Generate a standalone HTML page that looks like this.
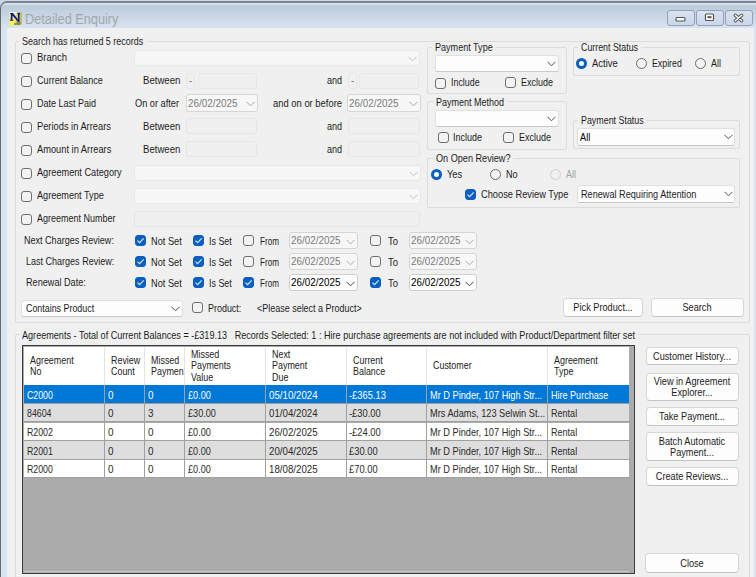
<!DOCTYPE html><html><head><meta charset="utf-8"><style>
html,body{margin:0;padding:0;}
body{width:756px;height:577px;position:relative;overflow:hidden;background:#c9d8ea;font-family:"Liberation Sans",sans-serif;}
.t{position:absolute;white-space:pre;transform-origin:0 0;}
.cb{position:absolute;width:11px;height:11px;box-sizing:border-box;border:1px solid #6f6f6f;border-radius:3px;background:#f3f3f3;}
.cb.on{background:#0a5fc0;border-color:#0a5fc0;}
.cb svg{position:absolute;left:-1px;top:-1px;}
.rb{position:absolute;width:11px;height:11px;box-sizing:border-box;border-radius:50%;border:1.3px solid #6a6a6a;background:#f4f4f4;}
.rb.on{border:3px solid #0a5fc0;background:#fff;}
.rb.dis{border-color:#cfcfcf;background:#f0f0f0;}
</style></head><body>
<div style="position:absolute;left:0px;top:1px;width:780px;height:600px;box-sizing:border-box;border-top:2px solid #7b8290;border-left:1px solid #6a6a70;border-top-left-radius:7px;background:linear-gradient(#e4e9ef 0px,#bccbdb 3px,#d8e4f1 26px,#d8e4f1 100%);"></div>
<svg style="position:absolute;left:8px;top:11px" width="15" height="14" viewBox="0 0 15 14">
<defs><linearGradient id="ig" x1="0" y1="0" x2="0" y2="1"><stop offset="0" stop-color="#f4f4dc"/><stop offset="0.55" stop-color="#e4e490"/><stop offset="1" stop-color="#f2ee50"/></linearGradient></defs>
<rect x="1" y="1" width="13" height="13" fill="url(#ig)"/>
<path d="M9 1 L14 1 L14 13 L12 14 L8 12 Z" fill="#b8b860" opacity="0.8"/>
<path d="M1 10 L6 10 L9 14 L1 14Z" fill="#f6f250"/>
<path d="M6 12 L13 11 L12 14 L6 14Z" fill="#5a5a30" opacity="0.6"/>
<path d="M1.5 2 L5 2 L10 8.5 L10 3.5 L9 2 L12.5 2 L11.5 3.5 L11.5 11 L10 11 L4.5 4.5 L4.5 8.5 L5.5 9.8 L1.5 9.8 L2.8 8.5 L2.8 3.3 Z" fill="#161680"/>
</svg>
<div class="t" style="left:25px;top:10.75px;font-size:14px;line-height:16.8px;color:#a2a6ab;transform:scaleX(0.91);">Detailed Enquiry</div>
<div style="position:absolute;left:667px;top:10px;width:28px;height:16px;box-sizing:border-box;border:1px solid #93a1b8;border-radius:3px;background:linear-gradient(#d9e3ef,#c9d7e8);"></div>
<div style="position:absolute;left:696px;top:10px;width:28px;height:16px;box-sizing:border-box;border:1px solid #93a1b8;border-radius:3px;background:linear-gradient(#d9e3ef,#c9d7e8);"></div>
<div style="position:absolute;left:725px;top:10px;width:28px;height:16px;box-sizing:border-box;border:1px solid #93a1b8;border-radius:3px;background:linear-gradient(#d9e3ef,#c9d7e8);"></div>
<svg style="position:absolute;left:667px;top:10px" width="90" height="16" viewBox="0 0 90 16"><rect x="9" y="7.5" width="9" height="3.5" rx="1" fill="#fff" stroke="#555" stroke-width="1.2"/><rect x="38.5" y="4" width="8" height="6.5" rx="1" fill="#fff" stroke="#555" stroke-width="1.2"/><rect x="40.5" y="6.2" width="4" height="2" fill="#555"/><path d="M68.3 5.3 L74.7 10.7 M74.7 5.3 L68.3 10.7" stroke="#555" stroke-width="3.4" stroke-linecap="round"/><path d="M68.3 5.3 L74.7 10.7 M74.7 5.3 L68.3 10.7" stroke="#fff" stroke-width="1.4" stroke-linecap="round"/></svg>
<div style="position:absolute;left:7px;top:28px;width:747px;height:560px;box-sizing:border-box;background:#f0f0f0;"></div>
<div style="position:absolute;left:15px;top:41px;width:735px;height:282px;box-sizing:border-box;border:1px solid #dcdcdc;border-radius:2px;"></div>
<div style="position:absolute;left:19.4px;top:38px;width:127.29999999999998px;height:6px;box-sizing:border-box;background:#f0f0f0;"></div>
<div class="t" style="left:22.4px;top:35.26px;font-size:10.5px;line-height:12.6px;color:#1c1c1c;transform:scaleX(0.8553);">Search has returned 5 records</div>
<div class="cb" style="left:21px;top:53px"></div>
<div class="t" style="left:37.0px;top:51.95px;font-size:10.2px;line-height:12.24px;color:#1c1c1c;transform:scaleX(0.9284);">Branch</div>
<div class="cb" style="left:21px;top:76px"></div>
<div class="t" style="left:37.0px;top:74.95px;font-size:10.2px;line-height:12.24px;color:#1c1c1c;transform:scaleX(0.8941);">Current Balance</div>
<div class="cb" style="left:21px;top:99px"></div>
<div class="t" style="left:37.0px;top:97.95px;font-size:10.2px;line-height:12.24px;color:#1c1c1c;transform:scaleX(0.8818);">Date Last Paid</div>
<div class="cb" style="left:21px;top:122px"></div>
<div class="t" style="left:37.0px;top:120.95px;font-size:10.2px;line-height:12.24px;color:#1c1c1c;transform:scaleX(0.9128);">Periods in Arrears</div>
<div class="cb" style="left:21px;top:145px"></div>
<div class="t" style="left:37.0px;top:143.95px;font-size:10.2px;line-height:12.24px;color:#1c1c1c;transform:scaleX(0.9114);">Amount in Arrears</div>
<div class="cb" style="left:21px;top:168px"></div>
<div class="t" style="left:37.0px;top:166.95px;font-size:10.2px;line-height:12.24px;color:#1c1c1c;transform:scaleX(0.901);">Agreement Category</div>
<div class="cb" style="left:21px;top:191px"></div>
<div class="t" style="left:37.0px;top:189.95px;font-size:10.2px;line-height:12.24px;color:#1c1c1c;transform:scaleX(0.8961);">Agreement Type</div>
<div class="cb" style="left:21px;top:214px"></div>
<div class="t" style="left:37.0px;top:212.95px;font-size:10.2px;line-height:12.24px;color:#1c1c1c;transform:scaleX(0.8842);">Agreement Number</div>
<div style="position:absolute;left:134px;top:50px;width:286px;height:16px;box-sizing:border-box;background:#f7f7f7;border:1px solid #e8e8e8;border-radius:3px;"></div>
<svg style="position:absolute;left:408px;top:55.5px" width="9" height="6" viewBox="0 0 9 6"><path d="M0.5 0.8 L4.5 4.8 L8.5 0.8" fill="none" stroke="#c0c0c0" stroke-width="1"/></svg>
<div class="t" style="left:142.6px;top:74.95px;font-size:10.2px;line-height:12.24px;color:#1c1c1c;transform:scaleX(0.9421);">Between</div>
<div style="position:absolute;left:186px;top:73px;width:9px;height:16px;box-sizing:border-box;background:#f0f0f0;border:1px solid #e6e6e6;border-radius:3px;"></div>
<div class="t" style="left:189px;top:74.06px;font-size:10.5px;line-height:12.6px;color:#707070;transform:scaleX(0.875);">-</div>
<div style="position:absolute;left:197.5px;top:73px;width:59.5px;height:16px;box-sizing:border-box;background:#f0f0f0;border:1px solid #e6e6e6;border-radius:3px;"></div>
<div class="t" style="left:326.7px;top:74.95px;font-size:10.2px;line-height:12.24px;color:#1c1c1c;transform:scaleX(0.8816);">and</div>
<div style="position:absolute;left:348px;top:73px;width:9px;height:16px;box-sizing:border-box;background:#f0f0f0;border:1px solid #e6e6e6;border-radius:3px;"></div>
<div class="t" style="left:351px;top:74.06px;font-size:10.5px;line-height:12.6px;color:#707070;transform:scaleX(0.875);">-</div>
<div style="position:absolute;left:359px;top:73px;width:60px;height:16px;box-sizing:border-box;background:#f0f0f0;border:1px solid #e6e6e6;border-radius:3px;"></div>
<div class="t" style="left:135.0px;top:97.95px;font-size:10.2px;line-height:12.24px;color:#1c1c1c;transform:scaleX(0.9025);">On or after</div>
<div style="position:absolute;left:186px;top:94px;width:72px;height:18px;box-sizing:border-box;background:#f7f7f7;border:1px solid #d6d6d6;border-radius:3px;"></div>
<div class="t" style="left:187.6px;top:96.86px;font-size:10.5px;line-height:12.6px;color:#7a7a7a;transform:scaleX(0.94);">26/02/2025</div>
<svg style="position:absolute;left:246px;top:101.0px" width="9" height="6" viewBox="0 0 9 6"><path d="M0.5 0.8 L4.5 4.8 L8.5 0.8" fill="none" stroke="#a8a8a8" stroke-width="1"/></svg>
<div class="t" style="left:272.6px;top:97.95px;font-size:10.2px;line-height:12.24px;color:#1c1c1c;transform:scaleX(0.9231);">and on or before</div>
<div style="position:absolute;left:347px;top:94px;width:74px;height:18px;box-sizing:border-box;background:#f7f7f7;border:1px solid #d6d6d6;border-radius:3px;"></div>
<div class="t" style="left:348.6px;top:96.86px;font-size:10.5px;line-height:12.6px;color:#7a7a7a;transform:scaleX(0.94);">26/02/2025</div>
<svg style="position:absolute;left:409px;top:101.0px" width="9" height="6" viewBox="0 0 9 6"><path d="M0.5 0.8 L4.5 4.8 L8.5 0.8" fill="none" stroke="#a8a8a8" stroke-width="1"/></svg>
<div class="t" style="left:142.6px;top:120.95px;font-size:10.2px;line-height:12.24px;color:#1c1c1c;transform:scaleX(0.9421);">Between</div>
<div style="position:absolute;left:186px;top:118px;width:71px;height:16px;box-sizing:border-box;background:#f0f0f0;border:1px solid #e6e6e6;border-radius:3px;"></div>
<div class="t" style="left:326.7px;top:120.95px;font-size:10.2px;line-height:12.24px;color:#1c1c1c;transform:scaleX(0.8816);">and</div>
<div style="position:absolute;left:347.5px;top:118px;width:72px;height:16px;box-sizing:border-box;background:#f0f0f0;border:1px solid #e6e6e6;border-radius:3px;"></div>
<div class="t" style="left:142.6px;top:143.95px;font-size:10.2px;line-height:12.24px;color:#1c1c1c;transform:scaleX(0.9421);">Between</div>
<div style="position:absolute;left:186px;top:141px;width:71px;height:16px;box-sizing:border-box;background:#f0f0f0;border:1px solid #e6e6e6;border-radius:3px;"></div>
<div class="t" style="left:326.7px;top:143.95px;font-size:10.2px;line-height:12.24px;color:#1c1c1c;transform:scaleX(0.8816);">and</div>
<div style="position:absolute;left:347.5px;top:141px;width:72px;height:16px;box-sizing:border-box;background:#f0f0f0;border:1px solid #e6e6e6;border-radius:3px;"></div>
<div style="position:absolute;left:134px;top:165px;width:286.5px;height:16px;box-sizing:border-box;background:#f7f7f7;border:1px solid #e8e8e8;border-radius:3px;"></div>
<svg style="position:absolute;left:408.5px;top:170.5px" width="9" height="6" viewBox="0 0 9 6"><path d="M0.5 0.8 L4.5 4.8 L8.5 0.8" fill="none" stroke="#c0c0c0" stroke-width="1"/></svg>
<div style="position:absolute;left:134px;top:188px;width:286.5px;height:16px;box-sizing:border-box;background:#f7f7f7;border:1px solid #e8e8e8;border-radius:3px;"></div>
<svg style="position:absolute;left:408.5px;top:193.5px" width="9" height="6" viewBox="0 0 9 6"><path d="M0.5 0.8 L4.5 4.8 L8.5 0.8" fill="none" stroke="#c0c0c0" stroke-width="1"/></svg>
<div style="position:absolute;left:134px;top:211px;width:285.5px;height:16px;box-sizing:border-box;background:#f0f0f0;border:1px solid #e6e6e6;border-radius:3px;"></div>
<div class="t" style="left:24.0px;top:233.86px;font-size:10.5px;line-height:12.6px;color:#1c1c1c;transform:scaleX(0.8607);">Next Charges Review:</div>
<div class="cb on" style="left:134.5px;top:235px"><svg width="11" height="11" viewBox="0 0 11 11"><path d="M2.5 5.6 L4.6 7.7 L8.7 3.4" fill="none" stroke="#d6e4f5" stroke-width="1.2"/></svg></div>
<div class="t" style="left:151.0px;top:234.66px;font-size:10.5px;line-height:12.6px;color:#1c1c1c;transform:scaleX(0.8767);">Not Set</div>
<div class="cb on" style="left:192.5px;top:235px"><svg width="11" height="11" viewBox="0 0 11 11"><path d="M2.5 5.6 L4.6 7.7 L8.7 3.4" fill="none" stroke="#d6e4f5" stroke-width="1.2"/></svg></div>
<div class="t" style="left:208.8px;top:234.66px;font-size:10.5px;line-height:12.6px;color:#1c1c1c;transform:scaleX(0.8492);">Is Set</div>
<div class="cb" style="left:242.5px;top:235px"></div>
<div class="t" style="left:259.6px;top:234.66px;font-size:10.5px;line-height:12.6px;color:#1c1c1c;transform:scaleX(0.7756);">From</div>
<div style="position:absolute;left:289px;top:232px;width:69px;height:17px;box-sizing:border-box;background:#f7f7f7;border:1px solid #d6d6d6;border-radius:3px;"></div>
<div class="t" style="left:290.6px;top:234.36px;font-size:10.5px;line-height:12.6px;color:#7a7a7a;transform:scaleX(0.94);">26/02/2025</div>
<svg style="position:absolute;left:346px;top:238.5px" width="9" height="6" viewBox="0 0 9 6"><path d="M0.5 0.8 L4.5 4.8 L8.5 0.8" fill="none" stroke="#a8a8a8" stroke-width="1"/></svg>
<div class="cb" style="left:370px;top:235px"></div>
<div class="t" style="left:387.8px;top:234.66px;font-size:10.5px;line-height:12.6px;color:#1c1c1c;transform:scaleX(0.9019);">To</div>
<div style="position:absolute;left:409px;top:232px;width:68px;height:17px;box-sizing:border-box;background:#f7f7f7;border:1px solid #d6d6d6;border-radius:3px;"></div>
<div class="t" style="left:410.6px;top:234.36px;font-size:10.5px;line-height:12.6px;color:#7a7a7a;transform:scaleX(0.94);">26/02/2025</div>
<svg style="position:absolute;left:465px;top:238.5px" width="9" height="6" viewBox="0 0 9 6"><path d="M0.5 0.8 L4.5 4.8 L8.5 0.8" fill="none" stroke="#a8a8a8" stroke-width="1"/></svg>
<div class="t" style="left:25.7px;top:254.86px;font-size:10.5px;line-height:12.6px;color:#1c1c1c;transform:scaleX(0.8587);">Last Charges Review:</div>
<div class="cb on" style="left:134.5px;top:256px"><svg width="11" height="11" viewBox="0 0 11 11"><path d="M2.5 5.6 L4.6 7.7 L8.7 3.4" fill="none" stroke="#d6e4f5" stroke-width="1.2"/></svg></div>
<div class="t" style="left:151.0px;top:255.66px;font-size:10.5px;line-height:12.6px;color:#1c1c1c;transform:scaleX(0.8767);">Not Set</div>
<div class="cb on" style="left:192.5px;top:256px"><svg width="11" height="11" viewBox="0 0 11 11"><path d="M2.5 5.6 L4.6 7.7 L8.7 3.4" fill="none" stroke="#d6e4f5" stroke-width="1.2"/></svg></div>
<div class="t" style="left:208.8px;top:255.66px;font-size:10.5px;line-height:12.6px;color:#1c1c1c;transform:scaleX(0.8492);">Is Set</div>
<div class="cb" style="left:242.5px;top:256px"></div>
<div class="t" style="left:259.6px;top:255.66px;font-size:10.5px;line-height:12.6px;color:#1c1c1c;transform:scaleX(0.7756);">From</div>
<div style="position:absolute;left:289px;top:253px;width:69px;height:17px;box-sizing:border-box;background:#f7f7f7;border:1px solid #d6d6d6;border-radius:3px;"></div>
<div class="t" style="left:290.6px;top:255.36px;font-size:10.5px;line-height:12.6px;color:#7a7a7a;transform:scaleX(0.94);">26/02/2025</div>
<svg style="position:absolute;left:346px;top:259.5px" width="9" height="6" viewBox="0 0 9 6"><path d="M0.5 0.8 L4.5 4.8 L8.5 0.8" fill="none" stroke="#a8a8a8" stroke-width="1"/></svg>
<div class="cb" style="left:370px;top:256px"></div>
<div class="t" style="left:387.8px;top:255.66px;font-size:10.5px;line-height:12.6px;color:#1c1c1c;transform:scaleX(0.9019);">To</div>
<div style="position:absolute;left:409px;top:253px;width:68px;height:17px;box-sizing:border-box;background:#f7f7f7;border:1px solid #d6d6d6;border-radius:3px;"></div>
<div class="t" style="left:410.6px;top:255.36px;font-size:10.5px;line-height:12.6px;color:#7a7a7a;transform:scaleX(0.94);">26/02/2025</div>
<svg style="position:absolute;left:465px;top:259.5px" width="9" height="6" viewBox="0 0 9 6"><path d="M0.5 0.8 L4.5 4.8 L8.5 0.8" fill="none" stroke="#a8a8a8" stroke-width="1"/></svg>
<div class="t" style="left:25.7px;top:275.86px;font-size:10.5px;line-height:12.6px;color:#1c1c1c;transform:scaleX(0.8683);">Renewal Date:</div>
<div class="cb on" style="left:134.5px;top:277px"><svg width="11" height="11" viewBox="0 0 11 11"><path d="M2.5 5.6 L4.6 7.7 L8.7 3.4" fill="none" stroke="#d6e4f5" stroke-width="1.2"/></svg></div>
<div class="t" style="left:151.0px;top:276.66px;font-size:10.5px;line-height:12.6px;color:#1c1c1c;transform:scaleX(0.8767);">Not Set</div>
<div class="cb on" style="left:192.5px;top:277px"><svg width="11" height="11" viewBox="0 0 11 11"><path d="M2.5 5.6 L4.6 7.7 L8.7 3.4" fill="none" stroke="#d6e4f5" stroke-width="1.2"/></svg></div>
<div class="t" style="left:208.8px;top:276.66px;font-size:10.5px;line-height:12.6px;color:#1c1c1c;transform:scaleX(0.8492);">Is Set</div>
<div class="cb on" style="left:242.5px;top:277px"><svg width="11" height="11" viewBox="0 0 11 11"><path d="M2.5 5.6 L4.6 7.7 L8.7 3.4" fill="none" stroke="#d6e4f5" stroke-width="1.2"/></svg></div>
<div class="t" style="left:259.6px;top:276.66px;font-size:10.5px;line-height:12.6px;color:#1c1c1c;transform:scaleX(0.7756);">From</div>
<div style="position:absolute;left:289px;top:274px;width:69px;height:17px;box-sizing:border-box;background:#fdfdfd;border:1px solid #cfcfcf;border-radius:3px;"></div>
<div class="t" style="left:290.6px;top:276.36px;font-size:10.5px;line-height:12.6px;color:#000;transform:scaleX(0.94);">26/02/2025</div>
<svg style="position:absolute;left:346px;top:280.5px" width="9" height="6" viewBox="0 0 9 6"><path d="M0.5 0.8 L4.5 4.8 L8.5 0.8" fill="none" stroke="#404040" stroke-width="1"/></svg>
<div class="cb on" style="left:370px;top:277px"><svg width="11" height="11" viewBox="0 0 11 11"><path d="M2.5 5.6 L4.6 7.7 L8.7 3.4" fill="none" stroke="#d6e4f5" stroke-width="1.2"/></svg></div>
<div class="t" style="left:387.8px;top:276.66px;font-size:10.5px;line-height:12.6px;color:#1c1c1c;transform:scaleX(0.9019);">To</div>
<div style="position:absolute;left:409px;top:274px;width:68px;height:17px;box-sizing:border-box;background:#fdfdfd;border:1px solid #cfcfcf;border-radius:3px;"></div>
<div class="t" style="left:410.6px;top:276.36px;font-size:10.5px;line-height:12.6px;color:#000;transform:scaleX(0.94);">26/02/2025</div>
<svg style="position:absolute;left:465px;top:280.5px" width="9" height="6" viewBox="0 0 9 6"><path d="M0.5 0.8 L4.5 4.8 L8.5 0.8" fill="none" stroke="#404040" stroke-width="1"/></svg>
<div style="position:absolute;left:21.3px;top:299.5px;width:162px;height:17px;box-sizing:border-box;background:#fdfdfd;border:1px solid #e0e0e0;border-bottom-color:#c8c8c8;border-radius:3px;"></div>
<svg style="position:absolute;left:171.3px;top:305.5px" width="9" height="6" viewBox="0 0 9 6"><path d="M0.5 0.8 L4.5 4.8 L8.5 0.8" fill="none" stroke="#505050" stroke-width="1"/></svg>
<div class="t" style="left:25.5px;top:302.06px;font-size:10.5px;line-height:12.6px;color:#1c1c1c;transform:scaleX(0.8455);">Contains Product</div>
<div class="cb" style="left:192.2px;top:302px"></div>
<div class="t" style="left:207.9px;top:301.56px;font-size:10.5px;line-height:12.6px;color:#1c1c1c;transform:scaleX(0.8516);">Product:</div>
<div class="t" style="left:257.0px;top:301.56px;font-size:10.5px;line-height:12.6px;color:#1c1c1c;transform:scaleX(0.8542);">&lt;Please select a Product&gt;</div>
<div style="position:absolute;left:563px;top:298px;width:80px;height:19px;box-sizing:border-box;background:#fdfdfd;border:1px solid #d6d6d6;border-bottom-color:#c4c4c4;border-radius:4px;"></div>
<div class="t" style="left:403.0px;width:400px;text-align:center;top:301.16px;font-size:10.5px;line-height:12.6px;color:#1c1c1c;transform:scaleX(0.875);transform-origin:50% 0">Pick Product...</div>
<div style="position:absolute;left:651px;top:298px;width:92.5px;height:19px;box-sizing:border-box;background:#fdfdfd;border:1px solid #d6d6d6;border-bottom-color:#c4c4c4;border-radius:4px;"></div>
<div class="t" style="left:497.25px;width:400px;text-align:center;top:301.16px;font-size:10.5px;line-height:12.6px;color:#1c1c1c;transform:scaleX(0.875);transform-origin:50% 0">Search</div>
<div style="position:absolute;left:427.4px;top:47px;width:139.2px;height:46.5px;box-sizing:border-box;border:1px solid #dcdcdc;border-radius:2px;"></div>
<div style="position:absolute;left:432.3px;top:44px;width:63.69999999999999px;height:6px;box-sizing:border-box;background:#f0f0f0;"></div>
<div class="t" style="left:435.3px;top:41.46px;font-size:10.5px;line-height:12.6px;color:#1c1c1c;transform:scaleX(0.8621);">Payment Type</div>
<div style="position:absolute;left:435.3px;top:55px;width:124px;height:17px;box-sizing:border-box;background:#fdfdfd;border:1px solid #e0e0e0;border-bottom-color:#c8c8c8;border-radius:3px;"></div>
<svg style="position:absolute;left:547.3px;top:61.0px" width="9" height="6" viewBox="0 0 9 6"><path d="M0.5 0.8 L4.5 4.8 L8.5 0.8" fill="none" stroke="#505050" stroke-width="1"/></svg>
<div class="cb" style="left:435px;top:77.6px"></div>
<div class="t" style="left:450.8px;top:75.66px;font-size:10.5px;line-height:12.6px;color:#1c1c1c;transform:scaleX(0.8446);">Include</div>
<div class="cb" style="left:505px;top:77px"></div>
<div class="t" style="left:521.0px;top:75.66px;font-size:10.5px;line-height:12.6px;color:#1c1c1c;transform:scaleX(0.8566);">Exclude</div>
<div style="position:absolute;left:427.4px;top:101px;width:139.2px;height:49px;box-sizing:border-box;border:1px solid #dcdcdc;border-radius:2px;"></div>
<div style="position:absolute;left:432.5px;top:98px;width:74.0px;height:6px;box-sizing:border-box;background:#f0f0f0;"></div>
<div class="t" style="left:435.5px;top:95.76px;font-size:10.5px;line-height:12.6px;color:#1c1c1c;transform:scaleX(0.8566);">Payment Method</div>
<div style="position:absolute;left:435.3px;top:110px;width:124px;height:16.5px;box-sizing:border-box;background:#fdfdfd;border:1px solid #e0e0e0;border-bottom-color:#c8c8c8;border-radius:3px;"></div>
<svg style="position:absolute;left:547.3px;top:115.75px" width="9" height="6" viewBox="0 0 9 6"><path d="M0.5 0.8 L4.5 4.8 L8.5 0.8" fill="none" stroke="#505050" stroke-width="1"/></svg>
<div class="cb" style="left:437.5px;top:132px"></div>
<div class="t" style="left:453.1px;top:131.26px;font-size:10.5px;line-height:12.6px;color:#1c1c1c;transform:scaleX(0.8535);">Include</div>
<div class="cb" style="left:503px;top:132px"></div>
<div class="t" style="left:519.0px;top:131.26px;font-size:10.5px;line-height:12.6px;color:#1c1c1c;transform:scaleX(0.8566);">Exclude</div>
<div style="position:absolute;left:573.4px;top:47px;width:167px;height:29px;box-sizing:border-box;border:1px solid #dcdcdc;border-radius:2px;"></div>
<div style="position:absolute;left:577.7px;top:44px;width:63.0px;height:6px;box-sizing:border-box;background:#f0f0f0;"></div>
<div class="t" style="left:580.7px;top:41.46px;font-size:10.5px;line-height:12.6px;color:#1c1c1c;transform:scaleX(0.842);">Current Status</div>
<div class="rb on" style="left:576px;top:58px"></div>
<div class="t" style="left:592.3px;top:57.06px;font-size:10.5px;line-height:12.6px;color:#1c1c1c;transform:scaleX(0.9024);">Active</div>
<div class="rb off" style="left:635.7px;top:58px"></div>
<div class="t" style="left:652.4px;top:57.06px;font-size:10.5px;line-height:12.6px;color:#1c1c1c;transform:scaleX(0.8369);">Expired</div>
<div class="rb off" style="left:694.8px;top:58px"></div>
<div class="t" style="left:711.3px;top:57.06px;font-size:10.5px;line-height:12.6px;color:#1c1c1c;transform:scaleX(0.8572);">All</div>
<div style="position:absolute;left:573.4px;top:120px;width:167px;height:29px;box-sizing:border-box;border:1px solid #dcdcdc;border-radius:2px;"></div>
<div style="position:absolute;left:577.7px;top:117px;width:68.69999999999993px;height:6px;box-sizing:border-box;background:#f0f0f0;"></div>
<div class="t" style="left:580.7px;top:114.26px;font-size:10.5px;line-height:12.6px;color:#1c1c1c;transform:scaleX(0.8459);">Payment Status</div>
<div style="position:absolute;left:577.3px;top:128px;width:158.2px;height:17.5px;box-sizing:border-box;background:#fdfdfd;border:1px solid #e0e0e0;border-bottom-color:#c8c8c8;border-radius:3px;"></div>
<svg style="position:absolute;left:723.5px;top:134.25px" width="9" height="6" viewBox="0 0 9 6"><path d="M0.5 0.8 L4.5 4.8 L8.5 0.8" fill="none" stroke="#505050" stroke-width="1"/></svg>
<div class="t" style="left:580.3px;top:131.21px;font-size:10.5px;line-height:12.6px;color:#000;transform:scaleX(0.875);">All</div>
<div style="position:absolute;left:427.4px;top:157.5px;width:313px;height:50px;box-sizing:border-box;border:1px solid #dcdcdc;border-radius:2px;"></div>
<div style="position:absolute;left:432.5px;top:154.5px;width:80.5px;height:6px;box-sizing:border-box;background:#f0f0f0;"></div>
<div class="t" style="left:435.5px;top:152.06px;font-size:10.5px;line-height:12.6px;color:#1c1c1c;transform:scaleX(0.8683);">On Open Review?</div>
<div class="rb on" style="left:430.8px;top:169px"></div>
<div class="t" style="left:447.0px;top:167.66px;font-size:10.5px;line-height:12.6px;color:#1c1c1c;transform:scaleX(0.8876);">Yes</div>
<div class="rb off" style="left:490px;top:169px"></div>
<div class="t" style="left:505.6px;top:167.66px;font-size:10.5px;line-height:12.6px;color:#1c1c1c;transform:scaleX(0.8644);">No</div>
<div class="rb dis" style="left:550px;top:169px"></div>
<div class="t" style="left:565.9px;top:167.66px;font-size:10.5px;line-height:12.6px;color:#a0a0a0;transform:scaleX(0.8572);">All</div>
<div class="cb on" style="left:465px;top:189px"><svg width="11" height="11" viewBox="0 0 11 11"><path d="M2.5 5.6 L4.6 7.7 L8.7 3.4" fill="none" stroke="#d6e4f5" stroke-width="1.2"/></svg></div>
<div class="t" style="left:480.6px;top:188.06px;font-size:10.5px;line-height:12.6px;color:#1c1c1c;transform:scaleX(0.8826);">Choose Review Type</div>
<div style="position:absolute;left:577.3px;top:185px;width:158.2px;height:17.5px;box-sizing:border-box;background:#fdfdfd;border:1px solid #e0e0e0;border-bottom-color:#c8c8c8;border-radius:3px;"></div>
<svg style="position:absolute;left:723.5px;top:191.25px" width="9" height="6" viewBox="0 0 9 6"><path d="M0.5 0.8 L4.5 4.8 L8.5 0.8" fill="none" stroke="#505050" stroke-width="1"/></svg>
<div class="t" style="left:580.7px;top:188.46px;font-size:10.5px;line-height:12.6px;color:#1c1c1c;transform:scaleX(0.8702);">Renewal Requiring Attention</div>
<div style="position:absolute;left:15px;top:334.4px;width:735px;height:260px;box-sizing:border-box;border:1px solid #dcdcdc;border-radius:2px;"></div>
<div style="position:absolute;left:20px;top:331.4px;width:618px;height:6px;box-sizing:border-box;background:#f0f0f0;"></div>
<div class="t" style="left:22px;top:329.06px;font-size:10.5px;line-height:12.6px;color:#1c1c1c;transform:scaleX(0.865);">Agreements - Total of Current Balances = -£319.13   Records Selected: 1 : Hire purchase agreements are not included with Product/Department filter set</div>
<div style="position:absolute;left:22px;top:345px;width:613px;height:229px;box-sizing:border-box;background:#ababab;border:1.5px solid #3c3c3c;border-bottom-width:1.5px;"></div>
<div style="position:absolute;left:23.5px;top:571px;width:610px;height:1px;background:#c8c8c8"></div>
<div style="position:absolute;left:23.5px;top:346.5px;width:605.5px;height:39px;box-sizing:border-box;background:#fff;border-bottom:1px solid #a0a0a0;"></div>
<div style="position:absolute;left:629px;top:346.5px;width:4.5px;height:226px;box-sizing:border-box;background:#ababab;"></div>
<div style="position:absolute;left:104px;top:346.5px;width:1px;height:38.5px;box-sizing:border-box;background:#e4e4e4;"></div>
<div style="position:absolute;left:144.3px;top:346.5px;width:1px;height:38.5px;box-sizing:border-box;background:#e4e4e4;"></div>
<div style="position:absolute;left:184.2px;top:346.5px;width:1px;height:38.5px;box-sizing:border-box;background:#e4e4e4;"></div>
<div style="position:absolute;left:265.2px;top:346.5px;width:1px;height:38.5px;box-sizing:border-box;background:#e4e4e4;"></div>
<div style="position:absolute;left:346.2px;top:346.5px;width:1px;height:38.5px;box-sizing:border-box;background:#e4e4e4;"></div>
<div style="position:absolute;left:426.3px;top:346.5px;width:1px;height:38.5px;box-sizing:border-box;background:#e4e4e4;"></div>
<div style="position:absolute;left:547.3px;top:346.5px;width:1px;height:38.5px;box-sizing:border-box;background:#e4e4e4;"></div>
<div class="t" style="left:30.0px;top:353.71px;font-size:10.5px;line-height:12.6px;color:#222;transform:scaleX(0.85);">Agreement</div>
<div class="t" style="left:30.0px;top:365.01px;font-size:10.5px;line-height:12.6px;color:#222;transform:scaleX(0.85);">No</div>
<div class="t" style="left:110.5px;top:353.71px;font-size:10.5px;line-height:12.6px;color:#222;transform:scaleX(0.85);">Review</div>
<div class="t" style="left:110.5px;top:365.01px;font-size:10.5px;line-height:12.6px;color:#222;transform:scaleX(0.85);">Count</div>
<div class="t" style="left:150.8px;top:353.71px;font-size:10.5px;line-height:12.6px;color:#222;transform:scaleX(0.85);">Missed</div>
<div class="t" style="left:150.8px;top:365.01px;font-size:10.5px;line-height:12.6px;color:#222;transform:scaleX(0.85);">Paymen</div>
<div class="t" style="left:190.7px;top:348.06px;font-size:10.5px;line-height:12.6px;color:#222;transform:scaleX(0.85);">Missed</div>
<div class="t" style="left:190.7px;top:359.36px;font-size:10.5px;line-height:12.6px;color:#222;transform:scaleX(0.85);">Payments</div>
<div class="t" style="left:190.7px;top:370.66px;font-size:10.5px;line-height:12.6px;color:#222;transform:scaleX(0.85);">Value</div>
<div class="t" style="left:271.7px;top:348.06px;font-size:10.5px;line-height:12.6px;color:#222;transform:scaleX(0.85);">Next</div>
<div class="t" style="left:271.7px;top:359.36px;font-size:10.5px;line-height:12.6px;color:#222;transform:scaleX(0.85);">Payment</div>
<div class="t" style="left:271.7px;top:370.66px;font-size:10.5px;line-height:12.6px;color:#222;transform:scaleX(0.85);">Due</div>
<div class="t" style="left:352.7px;top:353.71px;font-size:10.5px;line-height:12.6px;color:#222;transform:scaleX(0.85);">Current</div>
<div class="t" style="left:352.7px;top:365.01px;font-size:10.5px;line-height:12.6px;color:#222;transform:scaleX(0.85);">Balance</div>
<div class="t" style="left:432.8px;top:359.36px;font-size:10.5px;line-height:12.6px;color:#222;transform:scaleX(0.85);">Customer</div>
<div class="t" style="left:553.8px;top:353.71px;font-size:10.5px;line-height:12.6px;color:#222;transform:scaleX(0.85);">Agreement</div>
<div class="t" style="left:553.8px;top:365.01px;font-size:10.5px;line-height:12.6px;color:#222;transform:scaleX(0.85);">Type</div>
<div style="position:absolute;left:23.5px;top:385.2px;width:605.5px;height:18.65px;box-sizing:border-box;background:#0078d7;border-bottom:1px solid #a0a0a0;"></div>
<div style="position:absolute;left:104px;top:385.2px;width:1px;height:18.65px;box-sizing:border-box;background:#a0a0a0;"></div>
<div style="position:absolute;left:144.3px;top:385.2px;width:1px;height:18.65px;box-sizing:border-box;background:#a0a0a0;"></div>
<div style="position:absolute;left:184.2px;top:385.2px;width:1px;height:18.65px;box-sizing:border-box;background:#a0a0a0;"></div>
<div style="position:absolute;left:265.2px;top:385.2px;width:1px;height:18.65px;box-sizing:border-box;background:#a0a0a0;"></div>
<div style="position:absolute;left:346.2px;top:385.2px;width:1px;height:18.65px;box-sizing:border-box;background:#a0a0a0;"></div>
<div style="position:absolute;left:426.3px;top:385.2px;width:1px;height:18.65px;box-sizing:border-box;background:#a0a0a0;"></div>
<div style="position:absolute;left:547.3px;top:385.2px;width:1px;height:18.65px;box-sizing:border-box;background:#a0a0a0;"></div>
<div class="t" style="left:26.9px;top:388.69px;font-size:11px;line-height:13.2px;color:#fff;transform:scaleX(0.799);">C2000</div>
<div class="t" style="left:107.6px;top:388.69px;font-size:11px;line-height:13.2px;color:#fff;transform:scaleX(0.8993);">0</div>
<div class="t" style="left:147.9px;top:388.69px;font-size:11px;line-height:13.2px;color:#fff;transform:scaleX(0.8993);">0</div>
<div class="t" style="left:187.9px;top:388.69px;font-size:11px;line-height:13.2px;color:#fff;transform:scaleX(0.8284);">£0.00</div>
<div class="t" style="left:269.0px;top:388.69px;font-size:11px;line-height:13.2px;color:#fff;transform:scaleX(0.8828);">05/10/2024</div>
<div class="t" style="left:348.7px;top:388.69px;font-size:11px;line-height:13.2px;color:#fff;transform:scaleX(0.8497);">-£365.13</div>
<div class="t" style="left:430.3px;top:388.69px;font-size:11px;line-height:13.2px;color:#fff;transform:scaleX(0.8372);">Mr D Pinder, 107 High Str...</div>
<div class="t" style="left:551.0px;top:388.69px;font-size:11px;line-height:13.2px;color:#fff;transform:scaleX(0.8221);">Hire Purchase</div>
<div style="position:absolute;left:23.5px;top:403.84999999999997px;width:605.5px;height:18.65px;box-sizing:border-box;background:#dedede;border-bottom:1px solid #a0a0a0;"></div>
<div style="position:absolute;left:104px;top:403.84999999999997px;width:1px;height:18.65px;box-sizing:border-box;background:#a0a0a0;"></div>
<div style="position:absolute;left:144.3px;top:403.84999999999997px;width:1px;height:18.65px;box-sizing:border-box;background:#a0a0a0;"></div>
<div style="position:absolute;left:184.2px;top:403.84999999999997px;width:1px;height:18.65px;box-sizing:border-box;background:#a0a0a0;"></div>
<div style="position:absolute;left:265.2px;top:403.84999999999997px;width:1px;height:18.65px;box-sizing:border-box;background:#a0a0a0;"></div>
<div style="position:absolute;left:346.2px;top:403.84999999999997px;width:1px;height:18.65px;box-sizing:border-box;background:#a0a0a0;"></div>
<div style="position:absolute;left:426.3px;top:403.84999999999997px;width:1px;height:18.65px;box-sizing:border-box;background:#a0a0a0;"></div>
<div style="position:absolute;left:547.3px;top:403.84999999999997px;width:1px;height:18.65px;box-sizing:border-box;background:#a0a0a0;"></div>
<div class="t" style="left:26.9px;top:407.34px;font-size:11px;line-height:13.2px;color:#2a2a2a;transform:scaleX(0.799);">84604</div>
<div class="t" style="left:107.6px;top:407.34px;font-size:11px;line-height:13.2px;color:#2a2a2a;transform:scaleX(0.8993);">0</div>
<div class="t" style="left:147.9px;top:407.34px;font-size:11px;line-height:13.2px;color:#2a2a2a;transform:scaleX(0.8993);">3</div>
<div class="t" style="left:187.9px;top:407.34px;font-size:11px;line-height:13.2px;color:#2a2a2a;transform:scaleX(0.8284);">£30.00</div>
<div class="t" style="left:269.0px;top:407.34px;font-size:11px;line-height:13.2px;color:#2a2a2a;transform:scaleX(0.8828);">01/04/2024</div>
<div class="t" style="left:348.7px;top:407.34px;font-size:11px;line-height:13.2px;color:#2a2a2a;transform:scaleX(0.8497);">-£30.00</div>
<div class="t" style="left:430.3px;top:407.34px;font-size:11px;line-height:13.2px;color:#2a2a2a;transform:scaleX(0.8372);">Mrs Adams, 123 Selwin St...</div>
<div class="t" style="left:551.0px;top:407.34px;font-size:11px;line-height:13.2px;color:#2a2a2a;transform:scaleX(0.8221);">Rental</div>
<div style="position:absolute;left:23.5px;top:422.5px;width:605.5px;height:18.65px;box-sizing:border-box;background:#fff;border-bottom:1px solid #a0a0a0;"></div>
<div style="position:absolute;left:104px;top:422.5px;width:1px;height:18.65px;box-sizing:border-box;background:#a0a0a0;"></div>
<div style="position:absolute;left:144.3px;top:422.5px;width:1px;height:18.65px;box-sizing:border-box;background:#a0a0a0;"></div>
<div style="position:absolute;left:184.2px;top:422.5px;width:1px;height:18.65px;box-sizing:border-box;background:#a0a0a0;"></div>
<div style="position:absolute;left:265.2px;top:422.5px;width:1px;height:18.65px;box-sizing:border-box;background:#a0a0a0;"></div>
<div style="position:absolute;left:346.2px;top:422.5px;width:1px;height:18.65px;box-sizing:border-box;background:#a0a0a0;"></div>
<div style="position:absolute;left:426.3px;top:422.5px;width:1px;height:18.65px;box-sizing:border-box;background:#a0a0a0;"></div>
<div style="position:absolute;left:547.3px;top:422.5px;width:1px;height:18.65px;box-sizing:border-box;background:#a0a0a0;"></div>
<div class="t" style="left:26.9px;top:425.99px;font-size:11px;line-height:13.2px;color:#2a2a2a;transform:scaleX(0.799);">R2002</div>
<div class="t" style="left:107.6px;top:425.99px;font-size:11px;line-height:13.2px;color:#2a2a2a;transform:scaleX(0.8993);">0</div>
<div class="t" style="left:147.9px;top:425.99px;font-size:11px;line-height:13.2px;color:#2a2a2a;transform:scaleX(0.8993);">0</div>
<div class="t" style="left:187.9px;top:425.99px;font-size:11px;line-height:13.2px;color:#2a2a2a;transform:scaleX(0.8284);">£0.00</div>
<div class="t" style="left:269.0px;top:425.99px;font-size:11px;line-height:13.2px;color:#2a2a2a;transform:scaleX(0.8828);">26/02/2025</div>
<div class="t" style="left:348.7px;top:425.99px;font-size:11px;line-height:13.2px;color:#2a2a2a;transform:scaleX(0.8497);">-£24.00</div>
<div class="t" style="left:430.3px;top:425.99px;font-size:11px;line-height:13.2px;color:#2a2a2a;transform:scaleX(0.8372);">Mr D Pinder, 107 High Str...</div>
<div class="t" style="left:551.0px;top:425.99px;font-size:11px;line-height:13.2px;color:#2a2a2a;transform:scaleX(0.8221);">Rental</div>
<div style="position:absolute;left:23.5px;top:441.15px;width:605.5px;height:18.65px;box-sizing:border-box;background:#dedede;border-bottom:1px solid #a0a0a0;"></div>
<div style="position:absolute;left:104px;top:441.15px;width:1px;height:18.65px;box-sizing:border-box;background:#a0a0a0;"></div>
<div style="position:absolute;left:144.3px;top:441.15px;width:1px;height:18.65px;box-sizing:border-box;background:#a0a0a0;"></div>
<div style="position:absolute;left:184.2px;top:441.15px;width:1px;height:18.65px;box-sizing:border-box;background:#a0a0a0;"></div>
<div style="position:absolute;left:265.2px;top:441.15px;width:1px;height:18.65px;box-sizing:border-box;background:#a0a0a0;"></div>
<div style="position:absolute;left:346.2px;top:441.15px;width:1px;height:18.65px;box-sizing:border-box;background:#a0a0a0;"></div>
<div style="position:absolute;left:426.3px;top:441.15px;width:1px;height:18.65px;box-sizing:border-box;background:#a0a0a0;"></div>
<div style="position:absolute;left:547.3px;top:441.15px;width:1px;height:18.65px;box-sizing:border-box;background:#a0a0a0;"></div>
<div class="t" style="left:26.9px;top:444.64px;font-size:11px;line-height:13.2px;color:#2a2a2a;transform:scaleX(0.799);">R2001</div>
<div class="t" style="left:107.6px;top:444.64px;font-size:11px;line-height:13.2px;color:#2a2a2a;transform:scaleX(0.8993);">0</div>
<div class="t" style="left:147.9px;top:444.64px;font-size:11px;line-height:13.2px;color:#2a2a2a;transform:scaleX(0.8993);">0</div>
<div class="t" style="left:187.9px;top:444.64px;font-size:11px;line-height:13.2px;color:#2a2a2a;transform:scaleX(0.8284);">£0.00</div>
<div class="t" style="left:269.0px;top:444.64px;font-size:11px;line-height:13.2px;color:#2a2a2a;transform:scaleX(0.8828);">20/04/2025</div>
<div class="t" style="left:348.7px;top:444.64px;font-size:11px;line-height:13.2px;color:#2a2a2a;transform:scaleX(0.8497);">£30.00</div>
<div class="t" style="left:430.3px;top:444.64px;font-size:11px;line-height:13.2px;color:#2a2a2a;transform:scaleX(0.8372);">Mr D Pinder, 107 High Str...</div>
<div class="t" style="left:551.0px;top:444.64px;font-size:11px;line-height:13.2px;color:#2a2a2a;transform:scaleX(0.8221);">Rental</div>
<div style="position:absolute;left:23.5px;top:459.79999999999995px;width:605.5px;height:18.65px;box-sizing:border-box;background:#fff;border-bottom:1px solid #a0a0a0;"></div>
<div style="position:absolute;left:104px;top:459.79999999999995px;width:1px;height:18.65px;box-sizing:border-box;background:#a0a0a0;"></div>
<div style="position:absolute;left:144.3px;top:459.79999999999995px;width:1px;height:18.65px;box-sizing:border-box;background:#a0a0a0;"></div>
<div style="position:absolute;left:184.2px;top:459.79999999999995px;width:1px;height:18.65px;box-sizing:border-box;background:#a0a0a0;"></div>
<div style="position:absolute;left:265.2px;top:459.79999999999995px;width:1px;height:18.65px;box-sizing:border-box;background:#a0a0a0;"></div>
<div style="position:absolute;left:346.2px;top:459.79999999999995px;width:1px;height:18.65px;box-sizing:border-box;background:#a0a0a0;"></div>
<div style="position:absolute;left:426.3px;top:459.79999999999995px;width:1px;height:18.65px;box-sizing:border-box;background:#a0a0a0;"></div>
<div style="position:absolute;left:547.3px;top:459.79999999999995px;width:1px;height:18.65px;box-sizing:border-box;background:#a0a0a0;"></div>
<div class="t" style="left:26.9px;top:463.29px;font-size:11px;line-height:13.2px;color:#2a2a2a;transform:scaleX(0.799);">R2000</div>
<div class="t" style="left:107.6px;top:463.29px;font-size:11px;line-height:13.2px;color:#2a2a2a;transform:scaleX(0.8993);">0</div>
<div class="t" style="left:147.9px;top:463.29px;font-size:11px;line-height:13.2px;color:#2a2a2a;transform:scaleX(0.8993);">0</div>
<div class="t" style="left:187.9px;top:463.29px;font-size:11px;line-height:13.2px;color:#2a2a2a;transform:scaleX(0.8284);">£0.00</div>
<div class="t" style="left:269.0px;top:463.29px;font-size:11px;line-height:13.2px;color:#2a2a2a;transform:scaleX(0.8828);">18/08/2025</div>
<div class="t" style="left:348.7px;top:463.29px;font-size:11px;line-height:13.2px;color:#2a2a2a;transform:scaleX(0.8497);">£70.00</div>
<div class="t" style="left:430.3px;top:463.29px;font-size:11px;line-height:13.2px;color:#2a2a2a;transform:scaleX(0.8372);">Mr D Pinder, 107 High Str...</div>
<div class="t" style="left:551.0px;top:463.29px;font-size:11px;line-height:13.2px;color:#2a2a2a;transform:scaleX(0.8221);">Rental</div>
<div style="position:absolute;left:645.6px;top:346.5px;width:93px;height:18.7px;box-sizing:border-box;background:#fdfdfd;border:1px solid #d6d6d6;border-bottom-color:#c4c4c4;border-radius:4px;"></div>
<div class="t" style="left:492.1px;width:400px;text-align:center;top:349.51px;font-size:10.5px;line-height:12.6px;color:#1c1c1c;transform:scaleX(0.875);transform-origin:50% 0">Customer History...</div>
<div style="position:absolute;left:645.6px;top:372.5px;width:93px;height:28.6px;box-sizing:border-box;background:#fdfdfd;border:1px solid #d6d6d6;border-bottom-color:#c4c4c4;border-radius:4px;"></div>
<div class="t" style="left:492.1px;width:400px;text-align:center;top:374.81px;font-size:10.5px;line-height:12.6px;color:#1c1c1c;transform:scaleX(0.875);transform-origin:50% 0">View in Agreement</div>
<div class="t" style="left:492.1px;width:400px;text-align:center;top:386.11px;font-size:10.5px;line-height:12.6px;color:#1c1c1c;transform:scaleX(0.875);transform-origin:50% 0">Explorer...</div>
<div style="position:absolute;left:645.6px;top:407px;width:93px;height:18.8px;box-sizing:border-box;background:#fdfdfd;border:1px solid #d6d6d6;border-bottom-color:#c4c4c4;border-radius:4px;"></div>
<div class="t" style="left:492.1px;width:400px;text-align:center;top:410.06px;font-size:10.5px;line-height:12.6px;color:#1c1c1c;transform:scaleX(0.875);transform-origin:50% 0">Take Payment...</div>
<div style="position:absolute;left:645.6px;top:432.3px;width:93px;height:28.6px;box-sizing:border-box;background:#fdfdfd;border:1px solid #d6d6d6;border-bottom-color:#c4c4c4;border-radius:4px;"></div>
<div class="t" style="left:492.1px;width:400px;text-align:center;top:434.61px;font-size:10.5px;line-height:12.6px;color:#1c1c1c;transform:scaleX(0.875);transform-origin:50% 0">Batch Automatic</div>
<div class="t" style="left:492.1px;width:400px;text-align:center;top:445.91px;font-size:10.5px;line-height:12.6px;color:#1c1c1c;transform:scaleX(0.875);transform-origin:50% 0">Payment...</div>
<div style="position:absolute;left:645.6px;top:467.4px;width:93px;height:18.6px;box-sizing:border-box;background:#fdfdfd;border:1px solid #d6d6d6;border-bottom-color:#c4c4c4;border-radius:4px;"></div>
<div class="t" style="left:492.1px;width:400px;text-align:center;top:470.36px;font-size:10.5px;line-height:12.6px;color:#1c1c1c;transform:scaleX(0.875);transform-origin:50% 0">Create Reviews...</div>
<div style="position:absolute;left:645.4px;top:553.4px;width:93.3px;height:19.2px;box-sizing:border-box;background:#fdfdfd;border:1px solid #d6d6d6;border-bottom-color:#c4c4c4;border-radius:4px;"></div>
<div class="t" style="left:492.04999999999995px;width:400px;text-align:center;top:556.66px;font-size:10.5px;line-height:12.6px;color:#1c1c1c;transform:scaleX(0.875);transform-origin:50% 0">Close</div>
</body></html>
